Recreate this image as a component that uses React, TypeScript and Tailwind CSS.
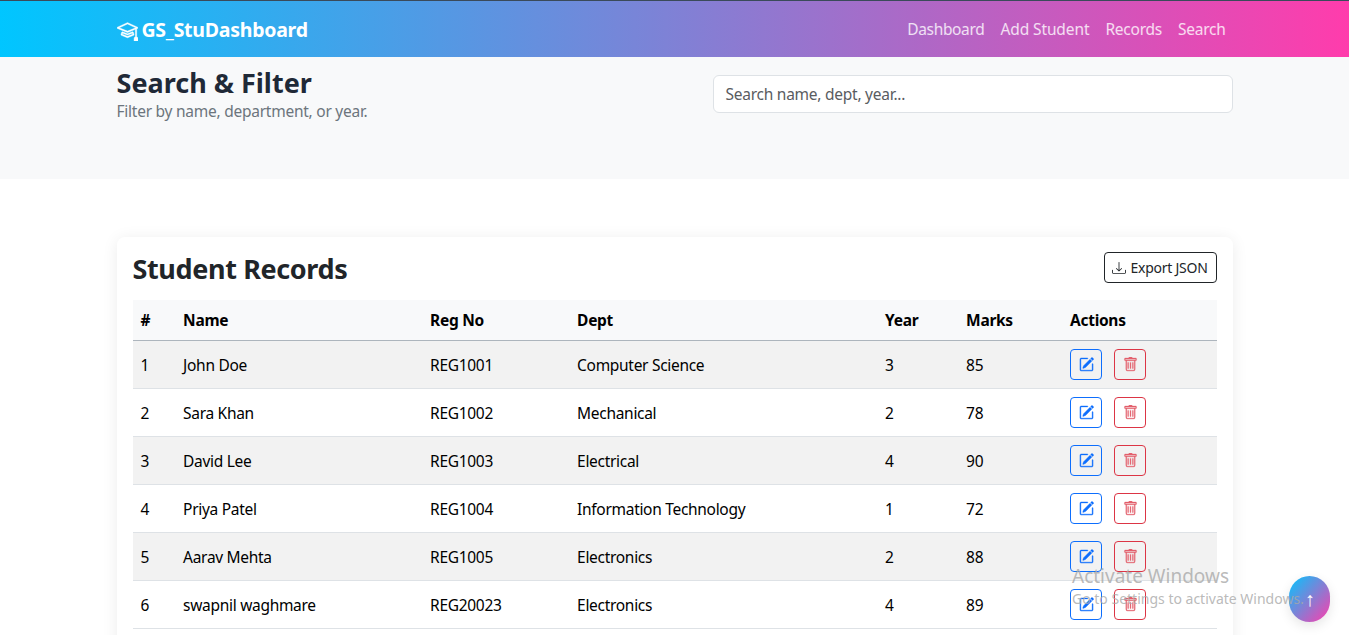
import { BsMortarboard, BsPencilSquare, BsTrash, BsDownload } from "react-icons/bs";

const rows = [
  ["1", "John Doe", "REG1001", "Computer Science", "3", "85"],
  ["2", "Sara Khan", "REG1002", "Mechanical", "2", "78"],
  ["3", "David Lee", "REG1003", "Electrical", "4", "90"],
  ["4", "Priya Patel", "REG1004", "Information Technology", "1", "72"],
  ["5", "Aarav Mehta", "REG1005", "Electronics", "2", "88"],
  ["6", "swapnil waghmare", "REG20023", "Electronics", "4", "89"],
];

const grid = "grid grid-cols-[42.6px_247px_147px_308px_81px_104px_147px]";

export default function App() {
  return (
    <div className="relative h-[635px] overflow-hidden bg-white text-[#212529] font-['Noto_Sans',sans-serif] text-[15px] tracking-[-0.25px]">
      <nav className="h-[57px] border-t border-[#3a4a5a] bg-linear-to-r/srgb from-[#00c6ff] to-[#ff3cac]">
        <div className="w-[1116px] mx-auto h-full flex items-center justify-between">
          <div className="flex items-center gap-[4px] text-white font-bold text-[19.5px] pt-[2px]">
            <BsMortarboard className="w-[21px] h-[21px] stroke-[0.3px]" />
            <span>GS_StuDashboard</span>
          </div>
          <div className="flex items-center gap-[16px] pr-[7px] pt-[2px] text-[15.5px] text-white/80">
            <span className="tracking-[-0.35px]">Dashboard</span>
            <span className="tracking-[-0.1px]">Add Student</span>
            <span>Records</span>
            <span>Search</span>
          </div>
        </div>
      </nav>

      <section className="h-[122px] bg-[#f8f9fa]">
        <div className="w-[1116px] mx-auto flex justify-between">
          <div>
            <h1 className="text-[27px] leading-[32px] font-bold text-[#1f2937] mt-[10px] tracking-normal">Search &amp; Filter</h1>
            <p className="text-[#6c757d] text-[15.5px] leading-[22px] mt-[1px]">Filter by name, department, or year.</p>
          </div>
          <div className="w-[520px] h-[38px] mt-[18px] px-[12px] pt-[2px] flex items-center bg-white border border-[#dee2e6] rounded-[6px] text-[#595c5f] text-[15.5px]">
            Search name, dept, year...
          </div>
        </div>
      </section>

      <section className="w-[1116px] mx-auto mt-[58px] bg-white rounded-[8px] shadow-[0_2px_16px_rgba(0,0,0,0.08)] px-[16px] pt-[15px] h-[500px]">
        <div className="flex items-start justify-between h-[32px]">
          <h2 className="text-[27px] leading-[34px] font-bold tracking-[-0.37px]">Student Records</h2>
          <button className="h-[31px] w-[113px] flex items-center justify-center gap-[4px] border border-[#212529] rounded-[4px] text-[14px]">
            <BsDownload className="w-[14px] h-[14px]" />
            Export JSON
          </button>
        </div>
        <div className="mt-[16px] text-[15.5px] tracking-[-0.3px]">
          <div className={`${grid} h-[41px] pt-[2px] items-center bg-[#f8f9fa] border-b border-[#adb5bd] font-bold text-black px-[8px]`}>
            <span>#</span><span>Name</span><span>Reg No</span><span>Dept</span><span>Year</span><span>Marks</span><span>Actions</span>
          </div>
          {rows.map((r, i) => (
            <div key={r[0]} className={`${grid} h-[48px] items-center border-b border-[#dee2e6] text-black px-[8px] ${i % 2 === 0 ? "bg-[#f2f2f2]" : "bg-white"}`}>
              {r.map((c, j) => <span key={j} className="pt-[2px]">{c}</span>)}
              <div className="flex gap-[12px]">
                <button className="w-[32px] h-[31px] flex items-center justify-center border border-[#0d6efd] rounded-[4px] text-[#0d6efd]">
                  <BsPencilSquare className="w-[15px] h-[15px] stroke-[0.4px]" />
                </button>
                <button className="w-[32px] h-[31px] flex items-center justify-center border border-[#dc3545] rounded-[4px] text-[#e4606d]">
                  <BsTrash className="w-[15px] h-[15px] stroke-[0.3px]" />
                </button>
              </div>
            </div>
          ))}
        </div>
      </section>

      <button className="absolute left-[1289px] top-[576px] w-[41px] h-[46px] rounded-full bg-linear-to-br/srgb from-[#00c6ff] to-[#ff3cac] text-white shadow-[0_4px_12px_rgba(0,0,0,0.1)] flex items-center justify-center text-[20px] leading-none">↑</button>
      <div className="absolute left-[1072px] top-[564px] text-[#a8a8a8]/80 text-[19px] leading-[24px] tracking-normal">Activate Windows</div>
      <div className="absolute left-[1072px] top-[590px] text-[#a8a8a8]/80 text-[14px] leading-[18px] tracking-normal">Go to Settings to activate Windows.</div>
    </div>
  );
}
